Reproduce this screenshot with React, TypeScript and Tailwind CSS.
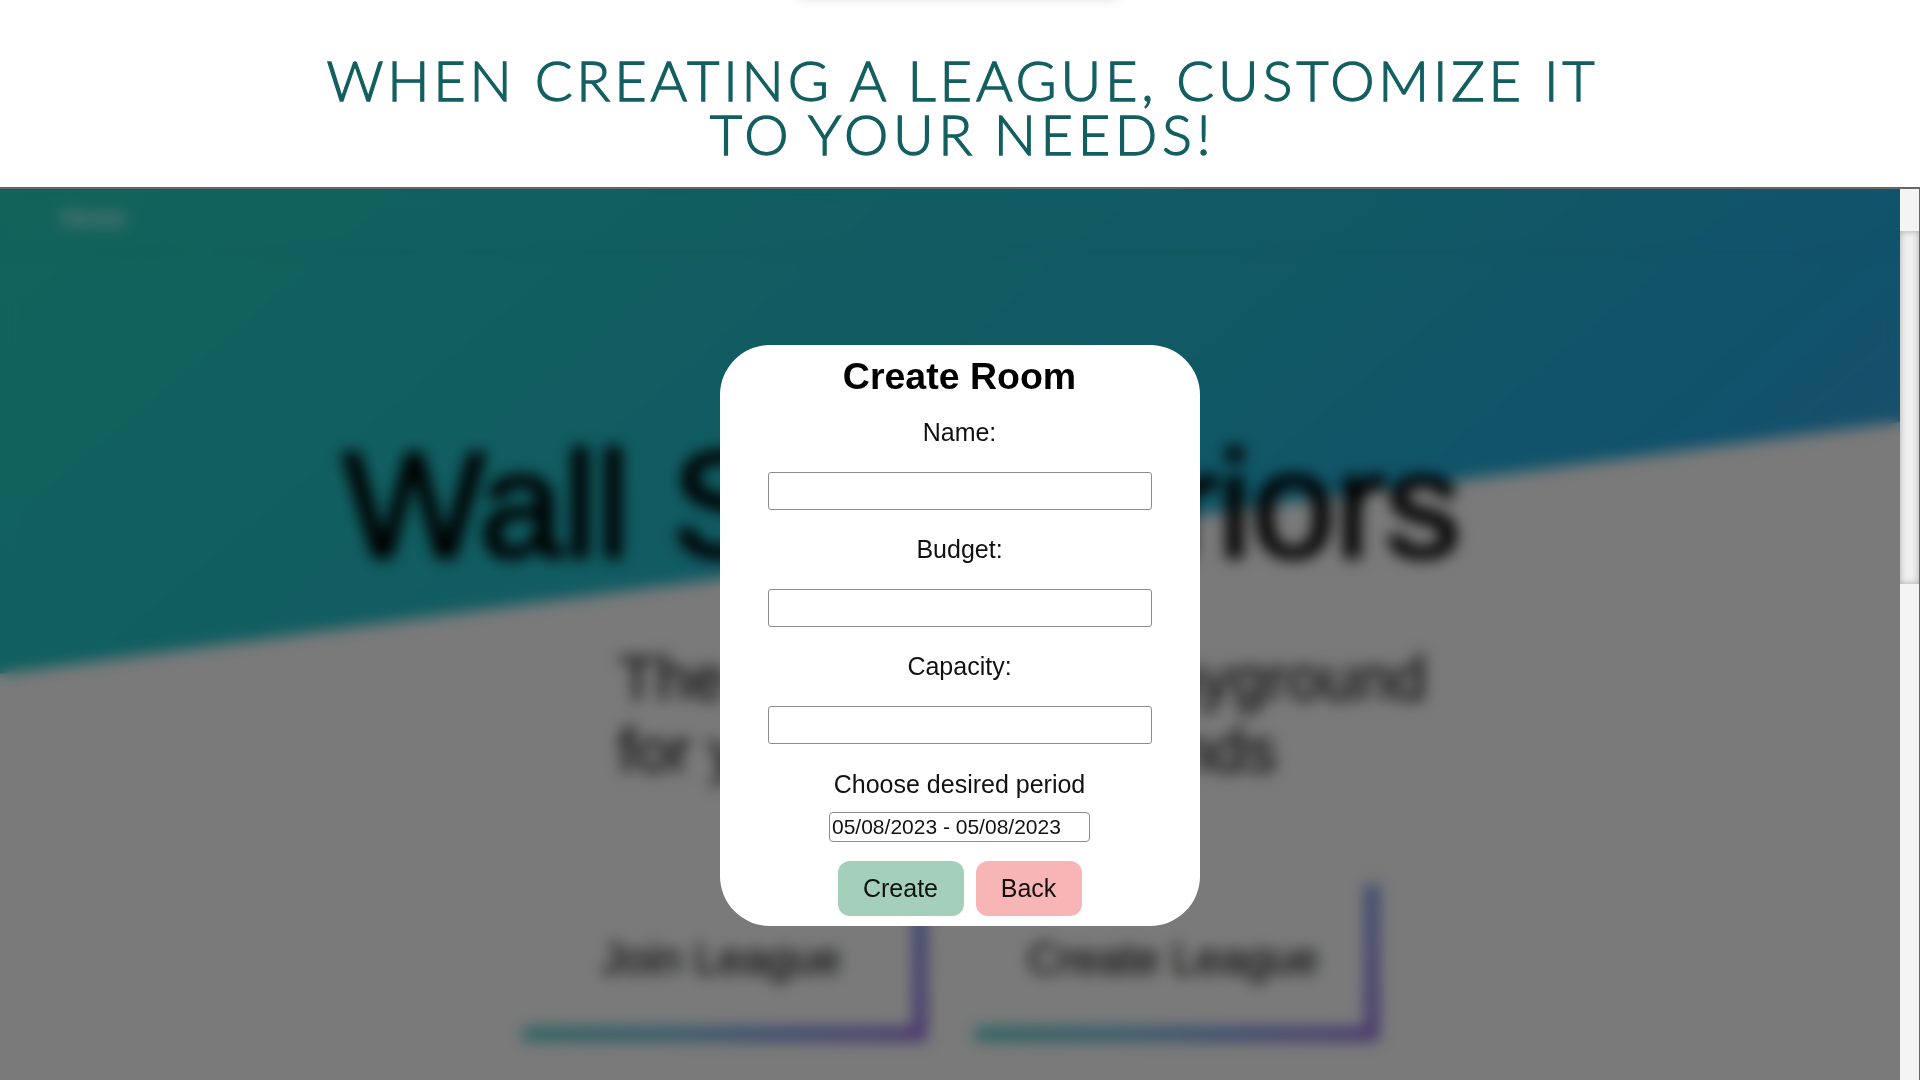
import type { ReactNode } from "react";

function Field({ label }: { label: string }) {
  return (
    <div className="flex h-[117.2px] w-full flex-col items-center">
      <label className="h-[28px] leading-[28px]">{label}</label>
      <input className="mt-[26px] h-[38px] w-[384px] rounded-[3px] border border-[#8c8c8c] bg-white outline-none" />
    </div>
  );
}

function LeagueCard({ children }: { children: ReactNode }) {
  return (
    <div className="h-[157px] w-[404px] bg-linear-[135deg,#50c4c0_28%,#66b0d4_55%,#7090dc_72%,#9068dc_100%] pr-[14px] pb-[14px]">
      <div className="flex h-full items-center justify-center bg-[#f5f5f5] pl-[6px] pt-[6px] text-[44px] text-[#1c1c1c] [-webkit-text-stroke:0.6px_#1c1c1c]">
        {children}
      </div>
    </div>
  );
}

function Landing() {
  return (
    <div className="relative h-full overflow-hidden bg-[#f4f4f4] text-black">
      <div className="absolute inset-x-0 top-0 h-[485px] bg-linear-[140deg,#24c8b4_0%,#22bcc2_30%,#22b0cc_60%,#22a4d8_80%,#3a9ad4_95%] [clip-path:polygon(0_0,100%_0,100%_233px,0_485px)]" />
      <div className="relative flex h-full flex-col">
        <nav className="h-[60px] pl-[62px] text-[23px] leading-[58px] font-bold text-white/80 shadow-[0_2px_8px_rgba(0,0,0,0.06)]">Home</nav>
        <h1 className="mt-[170px] ml-[343px] h-[172px] text-[150.5px] leading-[172px] whitespace-nowrap [-webkit-text-stroke:3.5px_#000]">Wall St. Warriors</h1>
        <p className="mt-[51px] ml-[618px] text-[62.7px] leading-[72px] whitespace-nowrap text-[#1c1c1c] [-webkit-text-stroke:0.7px_#1c1c1c]">
          The stock market playground
          <br />
          for you and your friends
        </p>
        <div className="mt-[98px] ml-[523px] flex gap-[48px]">
          <LeagueCard>Join League</LeagueCard>
          <LeagueCard>Create League</LeagueCard>
        </div>
      </div>
      <div className="absolute inset-0 bg-black/50 backdrop-blur-[7.5px]" />
    </div>
  );
}

function CreateRoom() {
  return (
    <div className="absolute top-[155.7px] left-[719.5px] flex h-[581px] w-[480px] flex-col items-center rounded-[50px] bg-white text-[25px] text-[#111]">
      <h2 className="mt-[10px] h-[43px] text-[37.5px] leading-[43px] font-bold text-black">Create Room</h2>
      <div className="mt-[20.2px] w-full">
        <Field label="Name:" />
        <Field label="Budget:" />
        <Field label="Capacity:" />
      </div>
      <label className="mt-[0.5px] h-[28px] leading-[28px]">Choose desired period</label>
      <input
        className="mt-[14px] h-[30.5px] w-[261px] rounded-[4px] border border-[#8c8c8c] bg-white px-[2px] text-[21px] outline-none"
        defaultValue="05/08/2023 - 05/08/2023"
      />
      <div className="mt-[19px] flex gap-[12px]">
        <button className="h-[54.5px] w-[126px] rounded-[12px] bg-[#a4cfbb]">Create</button>
        <button className="h-[54.5px] w-[106px] rounded-[12px] bg-[#f8b5b5]">Back</button>
      </div>
    </div>
  );
}

function Scrollbar() {
  return (
    <div className="w-[20px] shrink-0 border-r border-[#666] bg-[#f4f4f4]">
      <div className="mt-[42px] h-[353px] bg-[#f0f0f0] shadow-[inset_0_0_7px_rgba(0,0,0,0.3)]" />
    </div>
  );
}

export default function App() {
  return (
    <div className="flex h-[1080px] w-[1920px] flex-col overflow-hidden bg-white font-['Liberation_Sans',Arial,sans-serif]">
      <header className="relative h-[187px] shrink-0">
        <div className="absolute -top-[20px] left-[795px] h-[20px] w-[326px] rounded-[8px] shadow-[0_0_12px_rgba(0,0,0,0.1)]" />
        <h1 className="pt-[53px] pl-[5px] text-center font-[Lato,'Open_Sans',sans-serif] text-[56px] leading-[54px] font-light text-[#135f60] [-webkit-text-stroke:1.3px_#135f60]">
          <span className="tracking-[3.8px]">WHEN CREATING A LEAGUE, CUSTOMIZE IT</span>
          <br />
          <span className="tracking-[4.6px] [word-spacing:-3px]">TO YOUR NEEDS!</span>
        </h1>
      </header>
      <main className="relative flex h-[893px] border-t-2 border-[#666]">
        <div className="min-w-0 flex-1">
          <Landing />
        </div>
        <Scrollbar />
        <CreateRoom />
      </main>
    </div>
  );
}
